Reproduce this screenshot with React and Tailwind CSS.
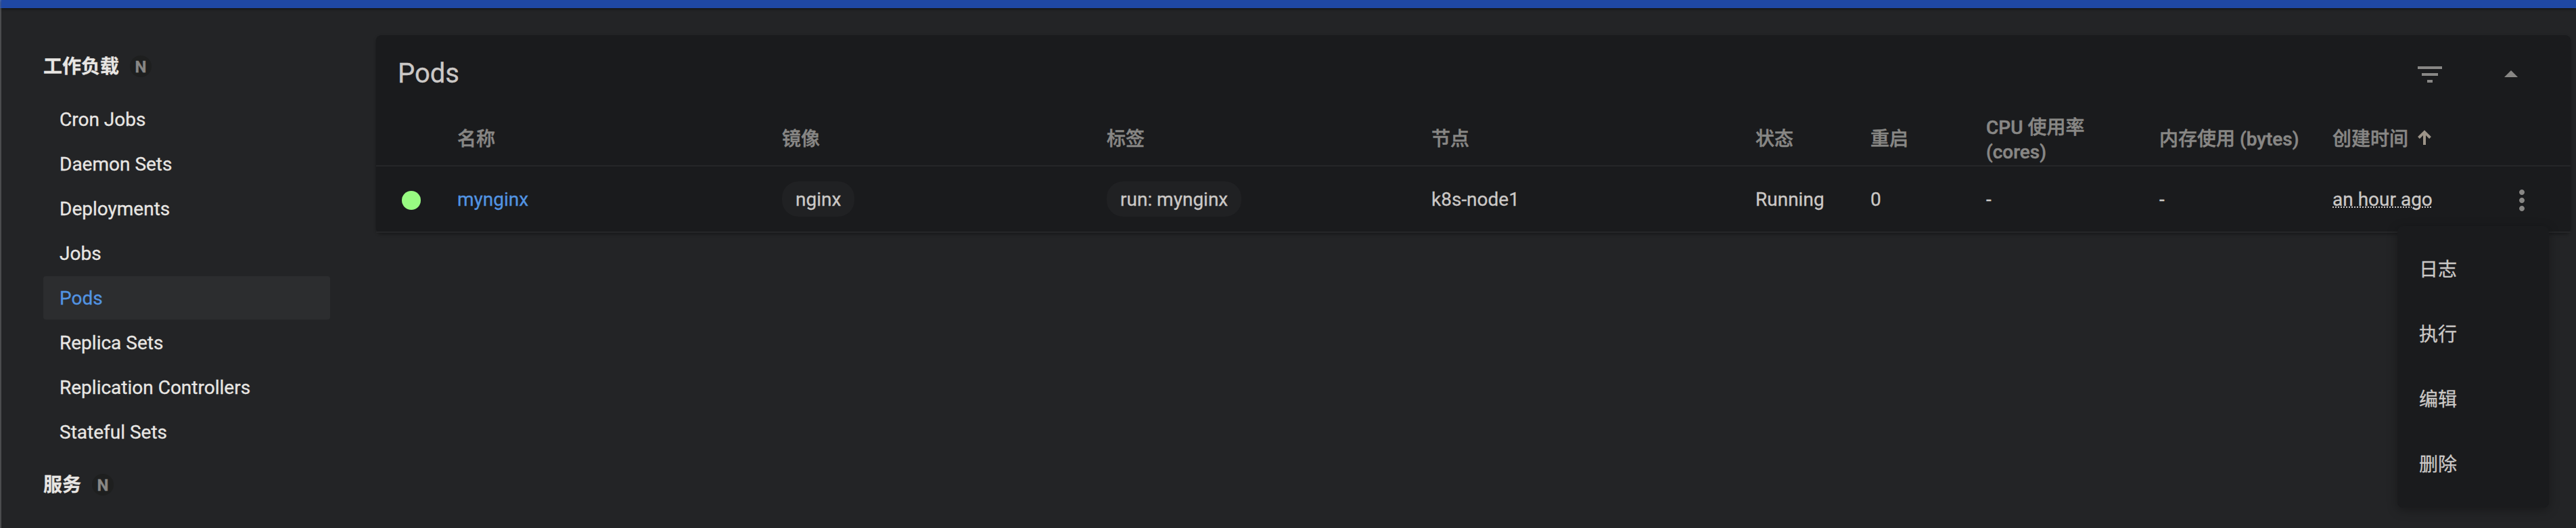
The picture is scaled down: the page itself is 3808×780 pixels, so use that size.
const workloads = [
  'Cron Jobs',
  'Daemon Sets',
  'Deployments',
  'Jobs',
  'Pods',
  'Replica Sets',
  'Replication Controllers',
  'Stateful Sets',
];

const actions = ['日志', '执行', '编辑', '删除'];

const columns =
  'grid grid-cols-[120px_480px_480px_480px_479px_170px_171px_256px_256px_1fr] items-center border-b-2 border-[#252628]';

function GroupTitle({ children }) {
  return (
    <div className="flex h-16 items-center font-bold text-[#e8e6e3]">
      <span className="pt-0.5">{children}</span>
      <span className="ml-4 flex size-8 items-center justify-center rounded-full bg-[#1e1f1f] pt-0.5 text-2xl leading-8 text-[#888785]">
        N
      </span>
    </div>
  );
}

function Icon({ d, className }) {
  return (
    <svg viewBox="0 0 24 24" className={className} fill="currentColor">
      <path d={d} />
    </svg>
  );
}

function Chip({ children }) {
  return (
    <span className="flex h-[52px] w-fit items-center rounded-[24px] bg-[#202123] px-5 pt-0.5">
      {children}
    </span>
  );
}

function Sidebar() {
  return (
    <nav className="w-[554px] shrink-0 pr-[68px] pl-[62px] pt-[54px]">
      <GroupTitle>工作负载</GroupTitle>
      <ul className="mt-[14px] flex flex-col gap-0.5">
        {workloads.map((name) => (
          <li
            key={name}
            className={
              name === 'Pods'
                ? 'flex h-16 items-center rounded bg-[#2c2d2f] px-6 pt-0.5 text-[#5294e2]'
                : 'flex h-16 items-center rounded px-6 pt-0.5 text-[#e8e6e3]'
            }
          >
            {name}
          </li>
        ))}
      </ul>
      <div className="mt-[14px]">
        <GroupTitle>服务</GroupTitle>
      </div>
    </nav>
  );
}

function PodsCard() {
  return (
    <section className="mt-10 h-[292px] w-[3244px] rounded-lg bg-[#1a1b1d] text-[#cbc8c6] shadow-[0_2px_4px_rgba(0,0,0,0.35)]">
      <header className="flex h-[116px] items-center pr-16 pl-8">
        <h1 className="flex-1 pb-0.5 text-[40px] leading-[48px]">Pods</h1>
        <Icon
          className="mr-[72px] size-12 text-[#888785]"
          d="M10 18h4v-2h-4v2zM3 6v2h18V6H3zm3 7h12v-2H6v2z"
        />
        <Icon className="size-12 text-[#888785]" d="M7 14l5-5 5 5z" />
      </header>
      <div className={`${columns} h-[78px] font-medium leading-9 text-[#888785] [-webkit-text-stroke:0.5px]`}>
        <span />
        <span>名称</span>
        <span>镜像</span>
        <span>标签</span>
        <span>节点</span>
        <span>状态</span>
        <span>重启</span>
        <span className="pt-0.5">
          CPU 使用率
          <br />
          (cores)
        </span>
        <span>内存使用 (bytes)</span>
        <span className="flex items-center">
          创建时间
          <svg viewBox="0 0 20 22" className="mb-1.5 ml-[14px] h-[22px] w-5" fill="none" stroke="#9d9488" strokeWidth="4">
            <path d="M10 22V3M1.5 11.5L10 3l8.5 8.5" />
          </svg>
        </span>
      </div>
      <div className={`${columns} h-[98px]`}>
        <span className="mt-1 ml-[38px] size-7 rounded-full bg-[#98fb82]" />
        <span className="pt-0.5 text-[#5294e2]">mynginx</span>
        <Chip>nginx</Chip>
        <Chip>run: mynginx</Chip>
        <span className="pt-0.5">k8s-node1</span>
        <span className="pt-0.5">Running</span>
        <span className="pt-0.5">0</span>
        <span className="pt-0.5">-</span>
        <span className="pt-0.5">-</span>
        <span className="flex items-center">
          <span className="flex-1 pt-0.5 underline decoration-dotted decoration-2">an hour ago</span>
          <Icon
            className="mt-1 mr-12 size-12 text-[#888785]"
            d="M12 8c1.1 0 2-.9 2-2s-.9-2-2-2-2 .9-2 2 .9 2 2 2zm0 2c-1.1 0-2 .9-2 2s.9 2 2 2 2-.9 2-2-.9-2-2-2zm0 6c-1.1 0-2 .9-2 2s.9 2 2 2 2-.9 2-2-.9-2-2-2z"
          />
        </span>
      </div>
    </section>
  );
}

export default function App() {
  return (
    <div
      lang="zh-CN"
      className="relative flex h-[780px] w-[3808px] overflow-hidden bg-[#232426] font-[Roboto,'Noto_Sans_CJK_SC',sans-serif] text-[28px] leading-10 [-webkit-text-stroke:0.3px]"
    >
      <div className="w-0.5 shrink-0 bg-[#4b4c4e]">
        <div className="h-3 bg-[#4468b5]" />
      </div>
      <div className="min-w-0 flex-1">
        <div className="h-3 bg-[#1f48a3] shadow-[0_1px_4px_rgba(0,0,0,0.6)]" />
        <div className="flex">
          <Sidebar />
          <PodsCard />
        </div>
      </div>
      <ul className="absolute top-[334px] left-[3544px] w-56 rounded-lg bg-[#1a1b1d] py-4 text-[#cbc8c6] shadow-[0_4px_16px_rgba(0,0,0,0.3)]">
        {actions.map((label) => (
          <li key={label} className="flex h-24 items-center px-8 pt-0.5">
            {label}
          </li>
        ))}
      </ul>
    </div>
  );
}
